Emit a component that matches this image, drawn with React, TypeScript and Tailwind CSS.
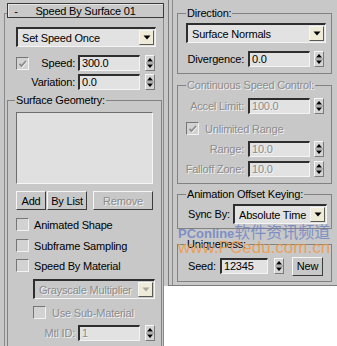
import React from "react";

const dis = "text-[#8c8c8c] [text-shadow:1px_1px_0_#f2f2f2]";
const sunken =
  "border-t-2 border-l-2 border-b border-r border-t-[#2e2e2e] border-l-[#2e2e2e] border-b-[#f4f4f4] border-r-[#f4f4f4]";
const raised =
  "border border-t-[#f6f6f6] border-l-[#f6f6f6] border-b-[#3c3c3c] border-r-[#3c3c3c]";

const Box = ({ checked = false, disabled = false }: { checked?: boolean; disabled?: boolean }) => (
  <div className="w-[13px] h-[13px] shrink-0 border border-t-[#767676] border-l-[#767676] border-b-[#f2f2f2] border-r-[#f2f2f2] bg-[#d2d2d2] flex items-center justify-center">
    {checked && (
      <svg width="9" height="9" viewBox="0 0 9 9">
        <path d="M1.5 5 L3.5 7 L8 2" stroke="#f4f4f4" strokeWidth="1.8" fill="none" transform="translate(0.6 0.6)" />
        <path d="M1.5 5 L3.5 7 L8 2" stroke={disabled ? "#8a8a8a" : "#000"} strokeWidth="1.8" fill="none" />
      </svg>
    )}
  </div>
);

const Spinner = () => (
  <div className={`w-[10px] h-[16px] shrink-0 ${raised} border-b-[#7a7a7a] border-r-[#7a7a7a] bg-[#d4d4d4]`}>
    <svg width="8" height="14" viewBox="0 0 8 14">
      <path d="M4 2 L7 5.5 H1 Z" fill="#000" />
      <line x1="0" x2="8" y1="7" y2="7" stroke="#8a8a8a" />
      <path d="M1 8.5 H7 L4 12 Z" fill="#000" />
    </svg>
  </div>
);

const Field = ({ value, disabled = false, className = "w-[62px]" }: { value: string; disabled?: boolean; className?: string }) => (
  <div className={`${className} h-[16px] shrink-0 ${sunken} bg-[#e2e2e2] pl-[2px] leading-[13px] ${disabled ? dis : ""}`}>
    {value}
  </div>
);

const Arrow = ({ disabled = false }: { disabled?: boolean }) => (
  <div className={`w-[15px] h-[15px] shrink-0 ${raised} border-b-[#5a5a50] border-r-[#5a5a50] bg-[#eeebd9] flex items-center justify-center`}>
    <svg width="8" height="5" viewBox="0 0 8 5">
      <path d="M0.5 0.5 H7.5 L4 4.5 Z" fill={disabled ? "#a8a8a0" : "#000"} />
    </svg>
  </div>
);

const Dropdown = ({ text, disabled = false, className }: { text: string; disabled?: boolean; className: string }) => (
  <div className={`${className} h-[20px] ${sunken} ${disabled ? "bg-[#c8c8c8]" : "bg-[#e2e2e2]"} flex items-center pl-[4px] pr-[1px]`}>
    <span className={`flex-1 whitespace-nowrap overflow-hidden ${disabled ? dis : ""}`}>{text}</span>
    <Arrow disabled={disabled} />
  </div>
);

const Btn = ({ label, disabled = false, className }: { label: string; disabled?: boolean; className: string }) => (
  <div className={`${className} h-[19px] ${raised} bg-[#c8c8c8] flex items-center justify-center whitespace-nowrap ${disabled ? dis : ""}`}>
    {label}
  </div>
);

const RRow = ({ label, value, disabled = false, className = "" }: { label: string; value: string; disabled?: boolean; className?: string }) => (
  <div className={`flex items-center h-[16px] ${className}`}>
    <span className={`w-[66px] text-right whitespace-nowrap ${disabled ? dis : ""}`}>{label}</span>
    <Field value={value} disabled={disabled} className="w-[62px] ml-[4px]" />
    <div className="ml-[4px]">
      <Spinner />
    </div>
  </div>
);

export default function App() {
  return (
    <div className="relative w-[337px] h-[346px] bg-white flex items-start overflow-hidden text-[11px] leading-[12px] tracking-[-0.2px] text-black font-['Liberation_Sans',Arial,sans-serif]">
      {/* left rollout */}
      <div className="w-[164px] h-[346px] shrink-0 bg-[#c8c8c8] overflow-hidden">
        <div className="relative z-10 ml-[7px] mt-[3px] w-[157px] h-[15px] border border-[#3a3a3a] bg-[#c9c9c9] shadow-[inset_1px_1px_0_#e6e6e6] flex items-center">
          <span className="w-[10px] ml-[3px] text-center">-</span>
          <span className="flex-1 text-center pr-[13px]">Speed By Surface 01</span>
        </div>
        <div className="ml-[4px] -mt-[5px] w-[160px] h-[400px] border-l border-t border-r border-[#8a8a8a]">
          <Dropdown text="Set Speed Once" className="ml-[11px] mt-[13px] w-[140px]" />

          <div className="flex items-center h-[16px] mt-[8px] ml-[11px]">
            <div className="w-[59px] flex items-center">
              <Box checked disabled />
              <span className="flex-1 text-right">Speed:</span>
            </div>
            <Field value="300.0" className="w-[62px] ml-[3px]" />
            <div className="ml-[5px]">
              <Spinner />
            </div>
          </div>
          <div className="flex items-center h-[16px] mt-[3px] ml-[11px]">
            <span className="w-[59px] text-right">Variation:</span>
            <Field value="0.0" className="w-[62px] ml-[3px]" />
            <div className="ml-[5px]">
              <Spinner />
            </div>
          </div>

          <fieldset className="ml-[2px] mt-[4px] w-[155px] h-[300px] border border-[#828282]">
            <legend className="ml-[7px] px-[1px] leading-[12px]">Surface Geometry:</legend>
            <div className="ml-[8px] mt-[6px] w-[137px] h-[72px] border border-t-[#6e6e6e] border-l-[#6e6e6e] border-b-[#f6f6f6] border-r-[#f6f6f6] bg-[#e0e0e0]" />
            <div className="flex mt-[7px] ml-[8px]">
              <Btn label="Add" className="w-[30px]" />
              <Btn label="By List" className="w-[40px] ml-[1px]" />
              <Btn label="Remove" disabled className="w-[60px] ml-[6px]" />
            </div>
            <div className="flex items-center ml-[8px] mt-[8px] gap-[5px]">
              <Box />
              <span>Animated Shape</span>
            </div>
            <div className="flex items-center ml-[8px] mt-[8px] gap-[5px]">
              <Box />
              <span>Subframe Sampling</span>
            </div>
            <div className="flex items-center ml-[8px] mt-[7px] gap-[5px]">
              <Box />
              <span>Speed By Material</span>
            </div>
            <Dropdown text="Grayscale Multiplier" disabled className="ml-[25px] mt-[7px] w-[122px]" />
            <div className="flex items-center ml-[25px] mt-[7px] gap-[6px]">
              <Box disabled />
              <span className={dis}>Use Sub-Material</span>
            </div>
            <div className="flex items-center h-[16px] mt-[6px] ml-[8px]">
              <span className={`w-[59px] text-right ${dis}`}>Mtl ID:</span>
              <Field value="1" disabled className="w-[62px] ml-[3px]" />
              <div className="ml-[5px]">
                <Spinner />
              </div>
            </div>
          </fieldset>
        </div>
      </div>

      {/* right rollout */}
      <div className="w-[173px] h-[286px] shrink-0 bg-[#c8c8c8] pl-[4px]">
        <div className="h-[286px] border-l border-b border-[#7c7c7c] pl-[3px]">
          <div className="h-[285px] border-l border-[#8a8a8a] pl-[4px] pt-[7px]">
            <fieldset className="w-[155px] border border-[#828282] pb-[6px]">
              <legend className="ml-[8px] px-[1px] leading-[12px]">Direction:</legend>
              <Dropdown text="Surface Normals" className="ml-[8px] mt-[4px] w-[140px]" />
              <RRow label="Divergence:" value="0.0" className="mt-[8px]" />
            </fieldset>

            <fieldset className="w-[155px] mt-[5px] border border-[#828282] pb-[6px]">
              <legend className={`ml-[8px] px-[1px] leading-[12px] ${dis}`}>Continuous Speed Control:</legend>
              <RRow label="Accel Limit:" value="100.0" disabled className="mt-[7px]" />
              <div className="flex items-center ml-[8px] mt-[8px] gap-[6px]">
                <Box checked disabled />
                <span className={dis}>Unlimited Range</span>
              </div>
              <RRow label="Range:" value="10.0" disabled className="mt-[6px]" />
              <RRow label="Falloff Zone:" value="10.0" disabled className="mt-[4px]" />
            </fieldset>

            <fieldset className="w-[155px] mt-[4px] border border-[#828282] pb-[4px]">
              <legend className="ml-[8px] px-[1px] leading-[12px]">Animation Offset Keying:</legend>
              <div className="flex items-center mt-[4px]">
                <span className="ml-[10px] w-[45px] whitespace-nowrap">Sync By:</span>
                <Dropdown text="Absolute Time" className="w-[94px]" />
              </div>
            </fieldset>

            <fieldset className="w-[155px] mt-[9px] border border-[#828282] pb-[7px]">
              <legend className="ml-[8px] px-[1px] leading-[12px]">Uniqueness:</legend>
              <div className="flex items-center h-[16px] mt-[8px]">
                <span className="ml-[10px] w-[32px] whitespace-nowrap">Seed:</span>
                <Field value="12345" className="w-[48px]" />
                <div className="ml-[6px]">
                  <Spinner />
                </div>
                <Btn label="New" className="w-[31px] h-[17px] ml-[8px]" />
              </div>
            </fieldset>
          </div>
        </div>
      </div>

      {/* watermark */}
      <div className="absolute left-[178px] top-[223px] pointer-events-none whitespace-nowrap tracking-normal">
        <div className="flex items-baseline h-[16px] leading-[16px] text-[#6a80c4]/80">
          <span className="font-bold text-[13px]">PConline</span>
          <span className="text-[16px] font-['Noto_Sans_CJK_SC',sans-serif]">软件资讯频道</span>
        </div>
        <div className="text-[17px] leading-[17px] text-[#f2963a]/80">www.PCedu.com.cn</div>
      </div>
    </div>
  );
}
